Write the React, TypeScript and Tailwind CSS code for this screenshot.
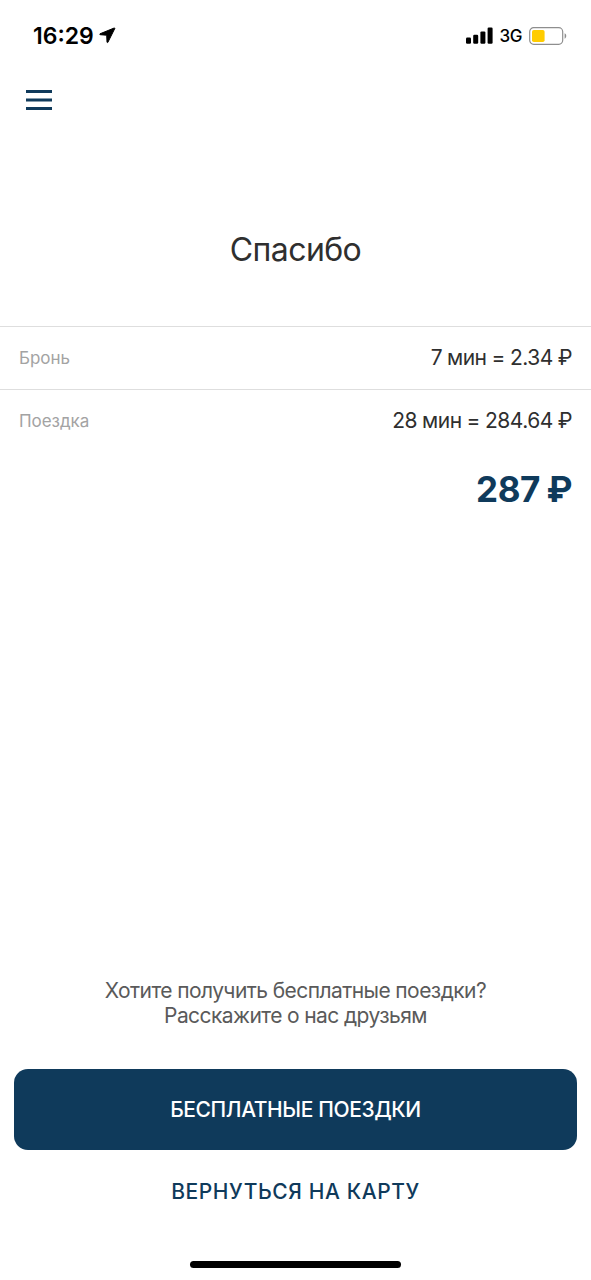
const items = [
  { id: 1, label: "Бронь", value: "7 мин = 2.34 ₽" },
  { id: 2, label: "Поездка", value: "28 мин = 284.64 ₽" },
];

const StatusBar = () => {
  return (
    <div className="flex h-[71px] items-center justify-between pl-[33px] pr-6 text-black">
      <div className="flex items-center gap-[5px]">
        <span className="pt-px text-[23px] font-semibold">16:29</span>
        <svg width="17" height="17" viewBox="0 0 17 17" fill="currentColor">
          <path
            d="M15.2 1 1 6.8c-.4.2-.3.9.1.9l6.6.5.3 6.9c0 .5.7.7.9.2L15.8 1.5c.1-.4-.2-.6-.6-.5Z"
            stroke="currentColor"
            strokeWidth="1"
            strokeLinejoin="round"
          />
        </svg>
      </div>
      <div className="flex items-center">
        <svg width="27" height="18" viewBox="0 0 27 18" fill="currentColor">
          <rect x="0" y="10.6" width="5" height="6.2" rx="1.2" />
          <rect x="7.2" y="7.8" width="5" height="9" rx="1.2" />
          <rect x="14.4" y="4.4" width="5" height="12.4" rx="1.2" />
          <rect x="21.6" y="0.6" width="5" height="16.2" rx="1.2" />
        </svg>
        <span className="ml-1.5 pt-0.5 text-[17px] font-medium tracking-[-0.4px]">3G</span>
        <svg className="ml-[7px]" width="38" height="18" viewBox="0 0 38 18">
          <rect x="0.7" y="0.7" width="33" height="16.6" rx="4" fill="none" stroke="#8e8e8e" strokeWidth="1.2" />
          <rect x="3" y="3" width="12.6" height="12" rx="1.8" fill="#fc0" />
          <path d="M35.6 6.3c2.2.8 2.2 4.6 0 5.4Z" fill="#8e8e8e" />
        </svg>
      </div>
    </div>
  );
};

const App = () => {
  return (
    <main className="flex h-[1280px] w-[591px] flex-col bg-white font-['Inter','Liberation_Sans',sans-serif] text-[#2f2f2f]">
      <StatusBar />
      <header className="flex h-[58px] items-center pl-[25.5px]">
        <button aria-label="Меню">
          <svg width="26" height="20" viewBox="0 0 26 20" fill="#0f3a5b">
            <rect y="0" width="26" height="3" />
            <rect y="8.5" width="26" height="3" />
            <rect y="17" width="26" height="3" />
          </svg>
        </button>
      </header>

      <h1 className="mt-[98px] h-[99px] text-center text-[32px] leading-[46px] tracking-[-0.6px]">Спасибо</h1>

      <section>
        {items.map((item) => (
          <div
            key={item.id}
            className="flex h-[63px] items-center justify-between border-t border-[#dedede] px-[19px]"
          >
            <span className="pt-0.5 text-[17px] tracking-[-0.05px] text-[#a3a3a3]">{item.label}</span>
            <span className="text-[21px] tracking-[-0.5px] [word-spacing:-0.4px]">{item.value}</span>
          </div>
        ))}
        <p className="px-[19px] pt-[15px] text-right text-[35px] font-bold leading-[44px] tracking-[-0.4px] text-[#0f3a5b] [word-spacing:-1.5px]">
          287 ₽
        </p>
      </section>

      <footer className="mt-auto flex flex-col items-center px-3.5 pb-3">
        <p className="text-center text-[21px] leading-[25px] tracking-[-0.56px] text-[#5a5a5a] [word-spacing:-0.2px]">
          Хотите получить бесплатные поездки?
          <br />
          Расскажите о нас друзьям
        </p>
        <button className="mt-[41px] h-[81px] w-full rounded-[14px] bg-[#0f3a5b] text-[21px] font-medium tracking-[-0.4px] text-white">
          БЕСПЛАТНЫЕ ПОЕЗДКИ
        </button>
        <button className="mt-[22px] h-10 text-[21px] font-medium tracking-[0.6px] text-[#0f3a5b]">
          ВЕРНУТЬСЯ НА КАРТУ
        </button>
        <div className="mt-[49px] h-[7px] w-[211px] rounded-full bg-black" />
      </footer>
    </main>
  );
};

export default App;
